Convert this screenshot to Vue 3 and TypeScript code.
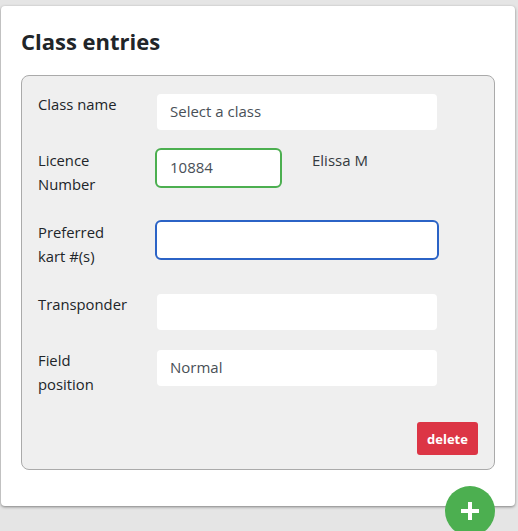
<script setup lang="ts">
interface Row {
  label: string[]
  value: string
  state?: 'valid' | 'focus'
  short?: boolean
  note?: string
}

const rows: Row[] = [
  { label: ['Class name'], value: 'Select a class' },
  { label: ['Licence', 'Number'], value: '10884', state: 'valid', short: true, note: 'Elissa M' },
  { label: ['Preferred', 'kart #(s)'], value: '', state: 'focus' },
  { label: ['Transponder'], value: '' },
  { label: ['Field', 'position'], value: 'Normal' },
]
</script>

<template>
  <div class="page">
    <section class="card">
      <h2 class="title">Class entries</h2>
      <div class="panel">
        <div v-for="row in rows" :key="row.label[0]" class="row">
          <div class="label">
            <div v-for="line in row.label" :key="line">{{ line }}</div>
          </div>
          <div class="field" :class="[row.state, { short: row.short }]">{{ row.value }}</div>
          <div v-if="row.note" class="note">{{ row.note }}</div>
        </div>
        <div class="actions">
          <button class="delete" type="button">delete</button>
        </div>
      </div>
    </section>
    <button class="add" type="button" aria-label="Add">
      <svg width="20" height="20" viewBox="0 0 20 20"><path d="M10 1v18M1 10h18" stroke="#fff" stroke-width="4" fill="none" /></svg>
    </button>
  </div>
</template>

<style>
html, body {
  margin: 0;
  height: 531px;
  overflow: hidden;
  background: #e5e5e5;
}
</style>

<style scoped>
.page {
  position: relative;
  height: 531px;
  padding: 6px 3px 0 1px;
  box-sizing: border-box;
  font-family: "Open Sans", "Noto Sans", sans-serif;
  font-size: 14.8px;
  color: #212529;
}
.card {
  height: 500px;
  box-sizing: border-box;
  padding: 20px 20px 0;
  background: #fff;
  border-radius: 4px;
  box-shadow: 0 1px 3px rgba(0, 0, 0, 0.45);
}
.title {
  margin: 0 0 19px;
  font-size: 22px;
  line-height: 30px;
  font-weight: 700;
  color: #212529;
}
.panel {
  height: 395px;
  box-sizing: border-box;
  padding: 18px 16px 0;
  background: #efefef;
  border: 1px solid #aaa;
  border-radius: 8px;
}
.row {
  display: flex;
  align-items: flex-start;
  margin-bottom: 20px;
}
.label {
  width: 119px;
  flex: none;
  line-height: 24px;
  margin-top: -2px;
  margin-bottom: 6px;
}
.field {
  width: 280px;
  height: 36px;
  box-sizing: border-box;
  padding: 0 13px;
  font-size: 15px;
  line-height: 35px;
  background: #fff;
  border-radius: 4px;
  color: #495057;
}
.field.short {
  width: 123px;
}
.field.valid {
  outline: 2px solid #4caf50;
}
.field.focus {
  outline: 2px solid #2b63c6;
}
.note {
  margin-left: 32px;
  margin-top: -2px;
  font-size: 15px;
  line-height: 24px;
  color: #343a40;
}
.actions {
  display: flex;
  justify-content: flex-end;
  margin-top: 12px;
}
.delete {
  width: 61px;
  height: 33px;
  padding: 0;
  border: 0;
  border-radius: 3px;
  background: #dc3545;
  color: #fff;
  font: 700 13px "Open Sans", "Noto Sans", sans-serif;
}
.add {
  position: absolute;
  left: 445px;
  top: 486px;
  width: 50px;
  height: 50px;
  padding: 0;
  border: 0;
  border-radius: 50%;
  background: #4caf50;
  display: flex;
  align-items: center;
  justify-content: center;
}
</style>
